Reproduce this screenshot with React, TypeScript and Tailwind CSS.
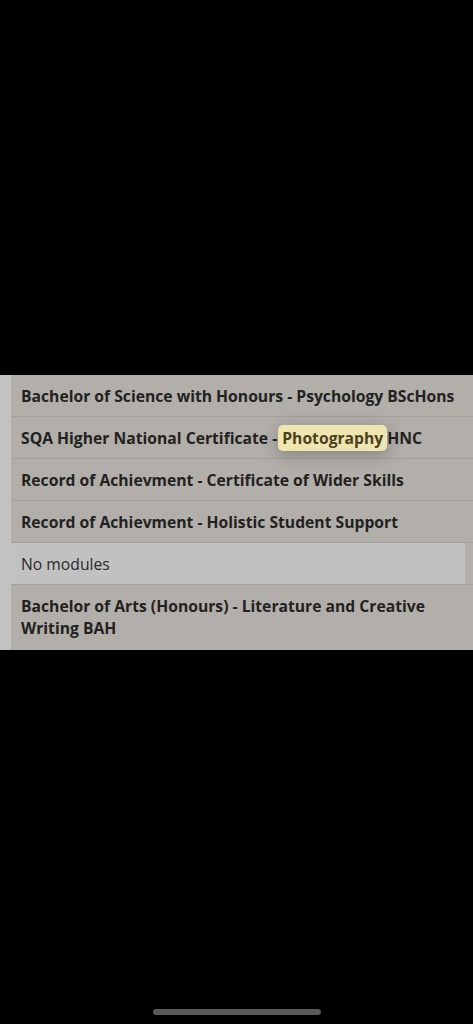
import React from "react";

const font = { fontFamily: '"Open Sans", "Noto Sans", sans-serif' };

function Row({ children, last }: { children: React.ReactNode; last?: boolean }) {
  return (
    <div
      className={`bg-[#b2aea9] px-[10px] pt-[10px] text-[15.7px] leading-[22px] font-bold text-[#222222] ${
        last ? "pb-[11px]" : "pb-[9px] border-b border-[#a39f9a]"
      }`}
    >
      {children}
    </div>
  );
}

export default function App() {
  return (
    <div className="w-[473px] h-[1024px] bg-black flex flex-col" style={font}>
      <div className="h-[375px]" />
      <div className="flex bg-[#c2c2c2]">
        <div className="w-[11px] shrink-0" />
        <div className="flex-1 flex flex-col">
          <Row>Bachelor of Science with Honours - Psychology BScHons</Row>
          <Row>
            SQA Higher National Certificate -
            <span className="relative inline-block ml-[1px] px-[4px] py-[2px] -my-[2px] rounded-[5px] bg-[#efe5b0] text-[#4a4120] shadow-[0_4px_18px_rgba(0,0,0,0.25)]">
              Photography
            </span>
            HNC
          </Row>
          <Row>Record of Achievment - Certificate of Wider Skills</Row>
          <Row>Record of Achievment - Holistic Student Support</Row>
          <div className="flex bg-[#b2aea9] border-b border-[#a39f9a]">
            <div className="flex-1 bg-[#c1c1c1] px-[10px] pt-[10px] pb-[9px] text-[15.7px] leading-[22px] text-[#2a2a2a]">
              No modules
            </div>
            <div className="w-[8px]" />
          </div>
          <Row last>
            Bachelor of Arts (Honours) - Literature and Creative Writing BAH
          </Row>
        </div>
      </div>
      <div className="flex-1" />
      <div className="flex justify-center pb-[9px]">
        <div className="w-[168px] h-[6px] rounded-full bg-[#5a5a5a]" />
      </div>
    </div>
  );
}
